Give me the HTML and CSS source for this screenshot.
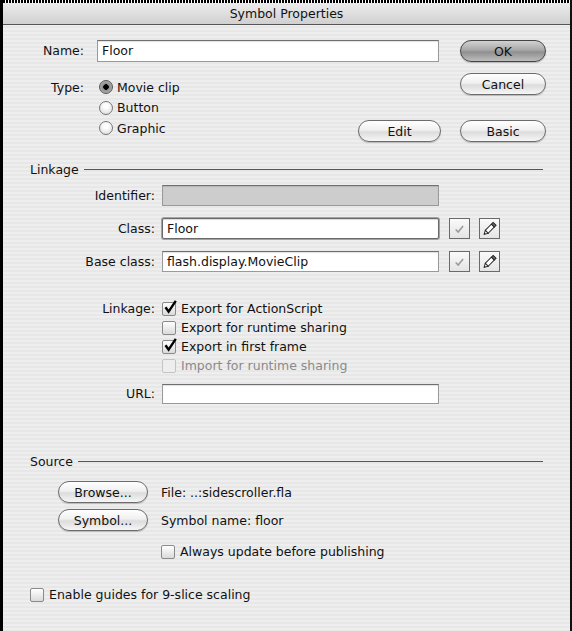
FILE: index.html
```html
<!DOCTYPE html>
<html lang="en">
<head>
  <meta charset="UTF-8">
  <title>Symbol Properties</title>
  <link rel="stylesheet" href="styles.css">
</head>
<body>
  <div class="dialog">
    <div class="dots"></div>
    <div class="titlebar">Symbol Properties</div>

    <div class="top">
      <span class="lbl">Name:</span>
      <div class="field name-field">Floor</div>
      <button class="btn default">OK</button>

      <span class="lbl type-lbl">Type:</span>
      <div class="type-area">
        <div class="radios">
          <div class="radio-row"><span class="radio on"></span>Movie clip</div>
          <div class="radio-row"><span class="radio"></span>Button</div>
          <div class="radio-row"><span class="radio"></span>Graphic</div>
        </div>
        <button class="btn edit">Edit</button>
      </div>
      <div class="btn-col">
        <button class="btn">Cancel</button>
        <button class="btn">Basic</button>
      </div>
    </div>

    <div class="section-head linkage-head"><span>Linkage</span><i></i></div>

    <div class="linkage">
      <span class="lbl">Identifier:</span>
      <div class="field disabled"></div>
      <div></div>

      <span class="lbl">Class:</span>
      <div class="field focus">Floor</div>
      <div class="tools">
        <span class="tool"><svg width="20" height="20" viewBox="0 0 20 20"><path d="M6 10.5 L8.6 13.2 L13.8 6.8" fill="none" stroke="#9a9a9a" stroke-width="1.6"/></svg></span>
        <span class="tool"><svg width="20" height="20" viewBox="0 0 20 20"><g transform="rotate(-45 10 10)"><polygon points="2,10 6,7.8 6,12.2" fill="#fff" stroke="#222" stroke-width="1"/><polygon points="2,10 3.6,9.1 3.6,10.9" fill="#222"/><rect x="6" y="7.8" width="9" height="4.4" fill="#fff" stroke="#222" stroke-width="1"/><rect x="15" y="7.8" width="2.6" height="4.4" fill="#666" stroke="#222" stroke-width="1"/></g></svg></span>
      </div>

      <span class="lbl">Base class:</span>
      <div class="field">flash.display.MovieClip</div>
      <div class="tools">
        <span class="tool"><svg width="20" height="20" viewBox="0 0 20 20"><path d="M6 10.5 L8.6 13.2 L13.8 6.8" fill="none" stroke="#9a9a9a" stroke-width="1.6"/></svg></span>
        <span class="tool"><svg width="20" height="20" viewBox="0 0 20 20"><g transform="rotate(-45 10 10)"><polygon points="2,10 6,7.8 6,12.2" fill="#fff" stroke="#222" stroke-width="1"/><polygon points="2,10 3.6,9.1 3.6,10.9" fill="#222"/><rect x="6" y="7.8" width="9" height="4.4" fill="#fff" stroke="#222" stroke-width="1"/><rect x="15" y="7.8" width="2.6" height="4.4" fill="#666" stroke="#222" stroke-width="1"/></g></svg></span>
      </div>
    </div>

    <div class="exports">
      <span class="lbl">Linkage:</span>
      <div class="checks">
        <div class="check-row"><span class="box on"><svg width="16" height="16" viewBox="0 0 16 16"><path d="M3.5 8.2 L6.6 12.6 L13.8 1.8" fill="none" stroke="#000" stroke-width="2.4"/></svg></span>Export for ActionScript</div>
        <div class="check-row"><span class="box"></span>Export for runtime sharing</div>
        <div class="check-row"><span class="box on"><svg width="16" height="16" viewBox="0 0 16 16"><path d="M3.5 8.2 L6.6 12.6 L13.8 1.8" fill="none" stroke="#000" stroke-width="2.4"/></svg></span>Export in first frame</div>
        <div class="check-row off"><span class="box"></span>Import for runtime sharing</div>
      </div>
      <span class="lbl url-lbl">URL:</span>
      <div class="field url-field"></div>
    </div>

    <div class="section-head source-head"><span>Source</span><i></i></div>

    <div class="source">
      <button class="btn src-btn">Browse...</button>
      <span>File: ..:sidescroller.fla</span>
      <button class="btn src-btn">Symbol...</button>
      <span>Symbol name: floor</span>
      <div></div>
      <div class="check-row always"><span class="box"></span>Always update before publishing</div>
    </div>

    <div class="check-row guides"><span class="box"></span>Enable guides for 9-slice scaling</div>
  </div>
</body>
</html>
```

FILE: styles.css
```css
body {
  margin: 0;
  background: #fff;
  font-family: "DejaVu Sans", sans-serif;
  font-size: 12.5px;
  color: #111;
}

.dialog {
  width: 572px;
  height: 631px;
  box-sizing: border-box;
  border-left: 3px solid #000;
  border-right: 2px solid #111;
  background: repeating-linear-gradient(to bottom, #eeeeee 0 2px, #e7e7e7 2px 4px);
  overflow: hidden;
}

.dots {
  height: 3px;
  background: repeating-linear-gradient(90deg, #000 0 2px, #fff 2px 3px);
}

.titlebar {
  height: 21px;
  line-height: 21px;
  text-align: center;
  background: linear-gradient(to bottom, #ececec, #d0d0d0);
  border-bottom: 1px solid #555;
  color: #111;
}

.lbl {
  text-align: right;
  line-height: 21px;
}

button.btn {
  font-family: inherit;
  font-size: 12.5px;
  color: #111;
  height: 22px;
  padding: 0;
  border: 1px solid #6c6c6c;
  border-radius: 11px;
  background: linear-gradient(to bottom, #ffffff 0%, #f0f0f0 45%, #dcdcdc 55%, #f6f6f6 100%);
  box-shadow: 0 1px 1px rgba(0,0,0,0.2);
}

button.default {
  border-color: #444;
  background: linear-gradient(to bottom, #d2d2d2 0%, #a8a8a8 45%, #8f8f8f 55%, #bdbdbd 100%);
}

.field {
  box-sizing: border-box;
  height: 21px;
  line-height: 19px;
  padding-left: 4px;
  background: #fff;
  border: 1px solid #9a9a9a;
  border-top-color: #6f6f6f;
  box-shadow: inset 0 1px 1px rgba(0,0,0,0.12);
}

.field.disabled {
  background: #cdcdcd;
}

.field.focus {
  border: 1px solid #6a6a6a;
  border-radius: 2px;
  box-shadow: 0 0 0 1px #a2a2a2, inset 0 1px 1px rgba(0,0,0,0.15);
}

/* top block */
.top {
  display: grid;
  grid-template-columns: 81px 350px 86px;
  column-gap: 13px;
  row-gap: 11px;
  padding-top: 15px;
}

.name-field {
  width: 342px;
  height: 22px;
  line-height: 20px;
}

.type-lbl {
  padding-top: 5px;
  line-height: 20px;
}

.type-area {
  width: 344px;
  display: flex;
  justify-content: space-between;
  align-items: flex-end;
}

.radios {
  align-self: flex-start;
  padding-top: 4px;
}

.radio-row {
  display: flex;
  align-items: center;
  height: 20.5px;
  gap: 4px;
  margin-left: 2px;
}

.radio {
  box-sizing: border-box;
  width: 14px;
  height: 14px;
  border-radius: 50%;
  border: 1px solid #777;
  background: radial-gradient(circle at 50% 35%, #fff 20%, #d6d6d6 100%);
}

.radio.on {
  background: radial-gradient(circle, #000 0 2.5px, #8e8e8e 3px, #c4c4c4 100%);
  border-color: #555;
}

.edit {
  width: 83px;
}

.btn-col {
  display: flex;
  flex-direction: column;
  gap: 25px;
}

/* section headers */
.section-head {
  display: flex;
  align-items: center;
  gap: 5px;
  padding: 0 27px;
  height: 16px;
}

.section-head i {
  flex: 1;
  height: 1px;
  background: #555;
}

.linkage-head {
  margin-top: 19px;
}

/* linkage block */
.linkage {
  display: grid;
  grid-template-columns: 152px 277px auto;
  column-gap: 7px;
  row-gap: 12px;
  margin-top: 8px;
}

.tools {
  display: flex;
  gap: 9px;
  padding-left: 3px;
}

.tool {
  box-sizing: border-box;
  width: 21px;
  height: 21px;
  border: 1px solid #6a6a6a;
  background: linear-gradient(to bottom, #fafafa, #e4e4e4);
  display: flex;
}

.exports {
  display: grid;
  grid-template-columns: 152px 277px;
  column-gap: 7px;
  margin-top: 27px;
}

.exports .lbl {
  line-height: 19px;
}

.check-row {
  display: flex;
  align-items: center;
  height: 19px;
  gap: 5px;
}

.check-row.off {
  color: #8a8a8a;
}

.box {
  position: relative;
  box-sizing: border-box;
  width: 14px;
  height: 14px;
  flex: none;
  border: 1px solid #8a8a8a;
  border-radius: 2px;
  background: linear-gradient(to bottom, #fff, #dadada);
}

.check-row.off .box {
  border-color: #c4c4c4;
  background: #eee;
}

.box svg {
  position: absolute;
  left: -1px;
  top: -4px;
}

.url-lbl {
  margin-top: 9px;
}

.url-field {
  margin-top: 9px;
  height: 20px;
}

.source-head {
  margin-top: 49px;
}

.source {
  display: grid;
  grid-template-columns: 145px auto;
  column-gap: 13px;
  row-gap: 6px;
  margin-top: 12px;
  align-items: center;
}

.src-btn {
  width: 90px;
  justify-self: end;
}

.always {
  margin-top: 5px;
}

.guides {
  margin: 24px 0 0 27px;
}
```
